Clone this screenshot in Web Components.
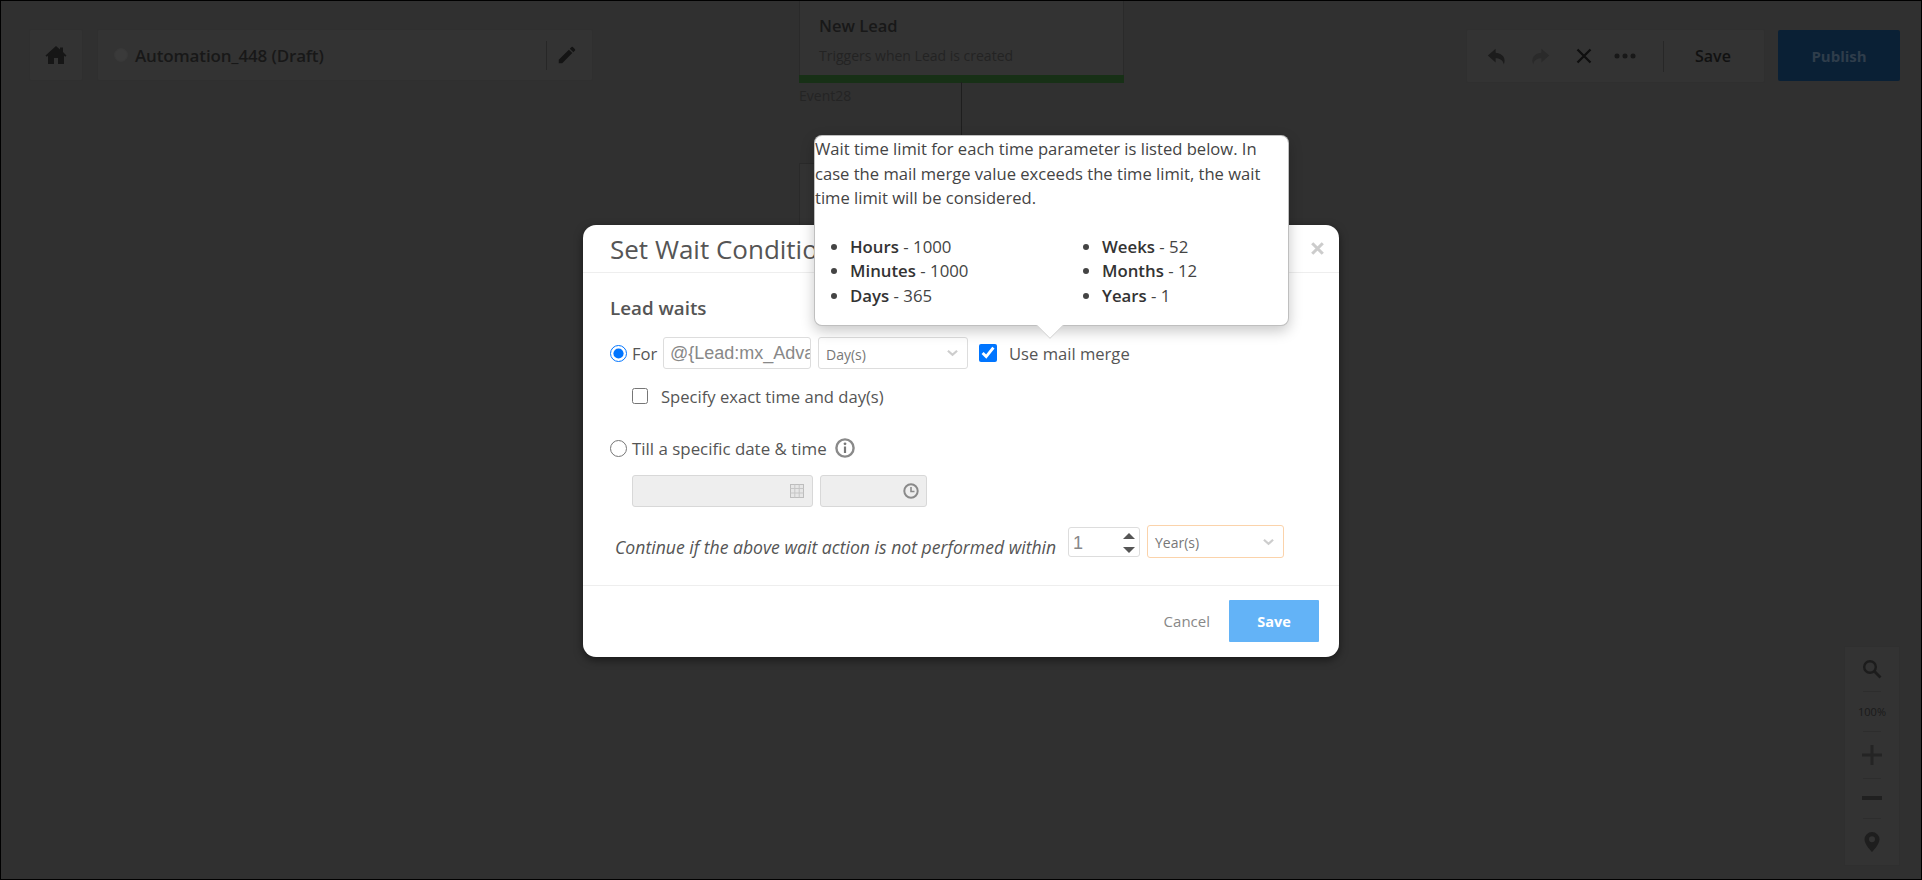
<!DOCTYPE html>
<html lang="en"><head><meta charset="utf-8"><title>Set Wait Condition</title>
<style>
html,body{margin:0;padding:0;background:#303030;}
body{font-family:"Open Sans","Noto Sans","Liberation Sans",sans-serif;}
</style></head><body>
<wait-app></wait-app>
<script>
const I={
home:'<svg viewBox="0 0 24 24" width="24" height="24"><path fill="currentColor" d="M12 3 1.5 12.6l1.2 1.2L4 12.8V21h6v-6h4v6h6v-8.2l1.3 1 1.2-1.2L19 9V4.5h-3v1.9z"/></svg>',
pencil:'<svg viewBox="0 0 24 24" width="22" height="22"><path fill="currentColor" d="M3 17.25V21h3.75L17.81 9.94l-3.75-3.75L3 17.25zM20.71 7.04a1 1 0 000-1.41l-2.34-2.34a1 1 0 00-1.41 0l-1.83 1.83 3.75 3.75 1.83-1.83z"/></svg>',
undo:'<svg viewBox="0 0 24 24" width="22" height="22"><path fill="currentColor" d="M10.500 8.500V4L2 11.500 10.500 19v-4.500c4 0 7.500 1.500 9 6.500 2.500-6-1-12-9-12.500z"/></svg>',
redo:'<svg viewBox="0 0 24 24" width="22" height="22" style="transform:scaleX(-1)"><path fill="currentColor" d="M10.500 8.500V4L2 11.500 10.500 19v-4.500c4 0 7.500 1.500 9 6.500 2.500-6-1-12-9-12.500z"/></svg>',
x:'<svg viewBox="0 0 16 16" width="16" height="16"><path fill="none" stroke="currentColor" stroke-width="2.300" d="M1.500 1.500 14.500 14.500M14.500 1.500 1.500 14.500"/></svg>',
dots:'<svg viewBox="0 0 22 6" width="22" height="6"><g fill="currentColor"><circle cx="3" cy="3" r="2.500"/><circle cx="11" cy="3" r="2.500"/><circle cx="19" cy="3" r="2.500"/></g></svg>',
search:'<svg viewBox="0 0 20 20" width="20" height="20"><circle cx="8" cy="8" r="5.800" fill="none" stroke="currentColor" stroke-width="2.400"/><path d="M12.300 12.300 18.500 18.500" stroke="currentColor" stroke-width="2.800"/></svg>',
plus:'<svg viewBox="0 0 20 20" width="20" height="20"><path d="M0 10H20M10 0V20" stroke="currentColor" stroke-width="3"/></svg>',
minus:'<svg viewBox="0 0 20 6" width="20" height="6"><path d="M0 3H20" stroke="currentColor" stroke-width="4"/></svg>',
pin:'<svg viewBox="0 0 16 20" width="16" height="20"><path fill="currentColor" fill-rule="evenodd" d="M8 0a7.500 7.500 0 0 0-7.500 7.500C.5 12.500 8 20 8 20s7.500-7.500 7.500-12.500A7.500 7.500 0 0 0 8 0zm0 10.300a3 3 0 1 1 0-6 3 3 0 0 1 0 6z"/></svg>',
chev:'<svg viewBox="0 0 12 8" width="11" height="8"><path d="M1 1.500 6 6l5-4.500" fill="none" stroke="#cdcdcd" stroke-width="2.400"/></svg>',
cal:'<svg viewBox="0 0 14 14" width="14" height="14"><rect x=".5" y=".5" width="13" height="13" fill="#e6e6e6" stroke="#bdbdbd"/><path d="M.5 4.500h13M.5 9h13M4.800.5v13M9.200.5v13" stroke="#c6c6c6" fill="none"/></svg>',
clock:'<svg viewBox="0 0 16 16" width="16" height="16"><circle cx="8" cy="8" r="6.700" fill="none" stroke="#8a8a8a" stroke-width="2"/><path d="M8 4v4.500h3.500" fill="none" stroke="#8a8a8a" stroke-width="1.600"/></svg>',
info:'<svg viewBox="0 0 20 20" width="20" height="20"><circle cx="10" cy="10" r="8.600" fill="#fff" stroke="#8a8a8a" stroke-width="2.400"/><path d="M10 8.500V15" stroke="#777" stroke-width="2.200"/><circle cx="10" cy="5.800" r="1.400" fill="#777"/></svg>'
};
function def(name,css,html){
  customElements.define(name,class extends HTMLElement{
    constructor(){super();const r=this.attachShadow({mode:'open'});
      r.innerHTML='<style>'+css+'</style>'+(typeof html==='function'?html(this):html);
    }
  });
}
def('tool-box',`:host{display:flex;align-items:center;box-sizing:border-box;height:52px;background:#333;border:1px solid #2f2f2f;border-radius:2px}`,'<slot></slot>');
def('tool-icon',`:host{display:flex;align-items:center;justify-content:center;color:var(--c,#141414);line-height:0}`,el=>I[el.getAttribute('name')]);
def('v-rule',`:host{display:block;width:1px;background:#272727;flex:none}`,'');

def('top-bar',`:host{display:flex;justify-content:space-between;align-items:flex-start;padding:28px 21px 0 28px;font-family:"Open Sans","Noto Sans",sans-serif}
 .l,.r{display:flex;align-items:flex-start}
 .l{gap:14px}.r{gap:13px}
 #home{width:54px;justify-content:center;--c:#161616}
 #name{width:496px;padding-left:16px;box-sizing:border-box}
 .dot{width:14px;height:14px;border-radius:50%;background:#3a3a3a;border:1px solid #383838;box-sizing:border-box;margin-right:7px;flex:none}
 .t{font-size:17px;font-weight:600;color:#181818;letter-spacing:-.15px;flex:1;white-space:nowrap}
 #name v-rule{height:29px;margin-right:9px}
 #name tool-icon{margin-right:14px}
 #tools{width:299px;height:54px;position:relative}
 #tools tool-icon{flex:none}
 .save{font-size:16px;font-weight:600;color:#111;margin-left:31px}
 .pub{display:flex;align-items:center;justify-content:center;width:122px;height:51px;margin-top:1px;background:#0a2035;border-radius:2px;color:#2f3d4b;font-size:15px;font-weight:700}
`,`<div class="l"><tool-box id="home"><tool-icon name="home"></tool-icon></tool-box>
 <tool-box id="name"><span class="dot"></span><span class="t">Automation_448 (Draft)</span><v-rule></v-rule><tool-icon name="pencil"></tool-icon></tool-box></div>
 <div class="r"><tool-box id="tools">
  <tool-icon name="undo" style="margin-left:19px;--c:#1c1c1c;"></tool-icon>
  <tool-icon name="redo" style="margin-left:21px;--c:#2a2a2a"></tool-icon>
  <tool-icon name="x" style="margin-left:25px;--c:#0f0f0f"></tool-icon>
  <tool-icon name="dots" style="margin-left:22px;--c:#181818"></tool-icon>
  <v-rule style="height:31px;margin-left:27px"></v-rule>
  <span class="save">Save</span>
 </tool-box>
 <div class="pub">Publish</div></div>`);

def('flow-node',`:host{display:block;position:absolute;box-sizing:border-box;width:325px;background:#333;border:1px solid #2a2a2a;font-family:"Open Sans","Noto Sans",sans-serif}
 .h{font-size:16.500px;font-weight:600;color:#181818;margin:0 0 0 19px;white-space:nowrap;padding-top:23px;line-height:21px}
 .s{font-size:14px;color:#232323;margin:9px 0 0 19px;line-height:21px;white-space:nowrap}
 .bar{position:absolute;left:-1px;right:-1px;bottom:-1px;height:8px;background:#173016}
`,`<div class="h"><slot name="title"></slot></div><div class="s"><slot name="sub"></slot></div><div class="bar"></div>`);

def('zoom-rail',`:host{display:flex;flex-direction:column;align-items:center;position:absolute;right:21px;bottom:13px;width:56px;height:220px;box-sizing:border-box;background:#333;border:1px solid #2f2f2f;color:#222;font-family:"Open Sans",sans-serif}
 .c{display:flex;align-items:center;justify-content:center;flex:none;width:100%}
 .c+.c{position:relative}
 .c+.c::before{content:"";position:absolute;top:0;left:18px;right:18px;height:1px;background:#2d2d2d}
 .pct{font-size:11px;color:#1a1a1a}
`,`<div class="c" style="height:44px"><tool-icon name="search" style="--c:#1c1c1c"></tool-icon></div>
 <div class="c pct" style="height:40px">100%</div>
 <div class="c" style="height:47px"><tool-icon name="plus" style="--c:#242424"></tool-icon></div>
 <div class="c" style="height:40px"><tool-icon name="minus" style="--c:#202020"></tool-icon></div>
 <div class="c" style="height:47px"><tool-icon name="pin" style="--c:#1e1e1e"></tool-icon></div>`);

def('form-field',`:host{display:flex;align-items:center;box-sizing:border-box;height:32px;border:1px solid #ddd;border-radius:3px;background:#fff;overflow:hidden;flex:none;color:#777;position:relative;font-size:14px;padding:2px 0 0 7px;white-space:nowrap;font-family:"Open Sans",sans-serif}
 :host([disabled]){background:#eee;border-color:#d8d8d8}
 :host([warn]){border-color:#fbd3ab;border-width:1.500px}
 :host([mono]){font-family:"Liberation Sans",Arial,sans-serif;font-size:18px;color:#888;padding:1px 0 0 6px}
 .i{position:absolute;right:var(--ir,9px);top:50%;transform:translateY(-50%);display:flex}
 .v{display:block}
`,el=>`<span class="v"><slot></slot></span>`+(el.getAttribute('icon')?`<span class="i">${I[el.getAttribute('icon')]}</span>`:''));

def('spin-field',`:host{display:flex;align-items:center;box-sizing:border-box;height:30px;width:72px;border:1px solid #ddd;border-radius:3px;background:#fff;flex:none;position:relative;font:18px "Liberation Sans",Arial,sans-serif;color:#888;padding:2px 0 0 4px}
 .a{position:absolute;right:4px;top:5px;display:flex;flex-direction:column;gap:8px}
 .u,.d{width:0;height:0;border-left:6px solid transparent;border-right:6px solid transparent}
 .u{border-bottom:6px solid #555}.d{border-top:6px solid #555}
`,`<slot></slot><span class="a"><i class="u"></i><i class="d"></i></span>`);

def('hint-popover',`:host{display:block;position:absolute;left:231px;top:-90px;width:475px;height:191px;box-sizing:border-box;background:#fff;border:1px solid rgba(0,0,0,.25);border-radius:8px;box-shadow:0 5px 14px rgba(0,0,0,.22);z-index:5;font-family:"Open Sans","Noto Sans",sans-serif;font-size:16.800px;line-height:24.500px;color:#444}
 .p{margin:0;padding:1px 0 0 0;font-size:16.600px}
 .cols{display:grid;grid-template-columns:252px 1fr;margin-top:24px;padding-left:35px}
 ul{margin:0;padding:0;}
 .arrow{position:absolute;left:225px;bottom:-10px;width:20px;height:20px;background:#fff;transform:rotate(45deg);border-right:1px solid rgba(0,0,0,.18);border-bottom:1px solid rgba(0,0,0,.18);box-sizing:border-box;clip-path:polygon(100% 0,100% 100%,0 100%)}
`,`<p class="p"><slot></slot></p><div class="cols"><ul><slot name="a"></slot></ul><ul><slot name="b"></slot></ul></div><span class="arrow"></span>`);

def('limit-item',`:host{display:list-item;list-style:disc;white-space:nowrap}
 b{font-weight:600;color:#333}`,el=>`<b>${el.getAttribute('k')}</b> - ${el.getAttribute('v')}`);

def('wait-modal',`:host{display:flex;flex-direction:column;position:relative;box-sizing:border-box;width:756px;height:432px;background:#fff;border-radius:13px;box-shadow:0 3px 9px rgba(0,0,0,.5);color:#555;font-family:"Open Sans","Noto Sans",sans-serif;font-size:16.600px}
 header{display:flex;align-items:center;height:48px;box-sizing:border-box;border-bottom:1px solid #eee;padding:0 0 0 27px;flex:none;position:relative}
 h2{margin:0;font-size:26px;font-weight:500;color:#555;white-space:nowrap}
 .close{position:absolute;right:15px;top:17px;color:#ccc;line-height:0}
 main{flex:1;padding:24px 0 0 27px;box-sizing:border-box}
 .lw{font-size:18.800px;font-weight:600;line-height:22px;color:#555;height:22px;}
 .row{display:flex;align-items:center;white-space:nowrap}
 input{margin:0;flex:none}
 input[type=radio]{width:17px;height:17px}
 .r1{margin-top:18px;height:32px}
 .r1 .lb{width:31px;margin-left:5px}
 .r2{margin-top:19px;height:16px;padding-left:22px}
 .r2 input{width:16px;height:16px;margin-right:13px}
 .r3{margin-top:32px;height:24px}
 .r3 .lb{margin-left:5px;margin-right:9px;width:194px;font-size:16.900px}
 .r4{margin-top:15px;padding-left:22px;gap:7px}
 .r5{margin-top:18px;padding-left:5px;align-items:flex-start;height:33px}
 .r5 em{width:453px;padding-top:9px;line-height:26px;display:block;font-size:17.600px}
 .cb{width:18px;height:18px;margin:0 12px 0 11px}
 footer{height:72px;box-sizing:border-box;border-top:1px solid #eee;display:flex;justify-content:flex-end;align-items:flex-start;padding:14px 20px 0 0;flex:none}
 .cancel{color:#888;font-size:15px;line-height:42px;margin-right:19px}
 .save{width:90px;height:42px;background:#63b3f7;color:#fff;font-weight:700;font-size:14.500px;display:flex;align-items:center;justify-content:center;border-radius:1px}
`,`<header><h2>Set Wait Condition</h2><span class="close">${I.x.replace('width="16" height="16"','width="13" height="13"').replace('2.300','3.800')}</span></header>
<main>
 <div class="lw">Lead waits</div>
 <div class="row r1"><input type="radio" name="w" checked><span class="lb">For</span>
  <form-field mono style="width:148px">@{Lead:mx_Adva</form-field>
  <form-field icon="chev" style="width:150px;margin-left:7px">Day(s)</form-field>
  <input class="cb" type="checkbox" checked><span>Use mail merge</span></div>
 <div class="row r2"><input type="checkbox"><span>Specify exact time and day(s)</span></div>
 <div class="row r3"><input type="radio" name="w"><span class="lb">Till a specific date &amp; time</span>${I.info}</div>
 <div class="row r4"><form-field disabled icon="cal" style="width:181px;--ir:8px"></form-field><form-field disabled icon="clock" style="width:107px;--ir:7px"></form-field></div>
 <div class="row r5"><em>Continue if the above wait action is not performed within</em><spin-field style="margin-top:2px">1</spin-field><form-field warn icon="chev" style="width:137px;height:33px;margin-left:7px">Year(s)</form-field></div>
</main>
<footer><span class="cancel">Cancel</span><span class="save">Save</span></footer>
<slot></slot>`);

def('modal-overlay',`:host{position:absolute;inset:0;display:flex;align-items:center;justify-content:center;z-index:10;padding-top:2px;box-sizing:border-box}`,'<slot></slot>');

def('wait-app',`:host{display:block;position:relative;box-sizing:border-box;width:1922px;height:880px;border:1px solid #000;overflow:hidden;background:#303030}
 .ev{position:absolute;left:798px;top:86px;font-size:14px;line-height:18px;color:#242424;font-family:"Open Sans",sans-serif}
 .ln{position:absolute;left:960px;top:81px;width:1px;height:60px;background:#1e1e1e}
 #n1{left:798px;top:-10px;height:92px}
 #n2{left:798px;top:162px;height:140px}
`,`<top-bar></top-bar>
 <flow-node id="n1"><span slot="title">New Lead</span><span slot="sub">Triggers when Lead is created</span></flow-node>
 <span class="ev">Event28</span><i class="ln"></i>
 <flow-node id="n2"></flow-node>
 <zoom-rail></zoom-rail>
 <modal-overlay><wait-modal><hint-popover>Wait time limit for each time parameter is listed below. In case the mail merge value exceeds the time limit, the wait time limit will be considered.
  <limit-item slot="a" k="Hours" v="1000"></limit-item><limit-item slot="a" k="Minutes" v="1000"></limit-item><limit-item slot="a" k="Days" v="365"></limit-item>
  <limit-item slot="b" k="Weeks" v="52"></limit-item><limit-item slot="b" k="Months" v="12"></limit-item><limit-item slot="b" k="Years" v="1"></limit-item>
 </hint-popover></wait-modal></modal-overlay>`);
</script></body></html>
